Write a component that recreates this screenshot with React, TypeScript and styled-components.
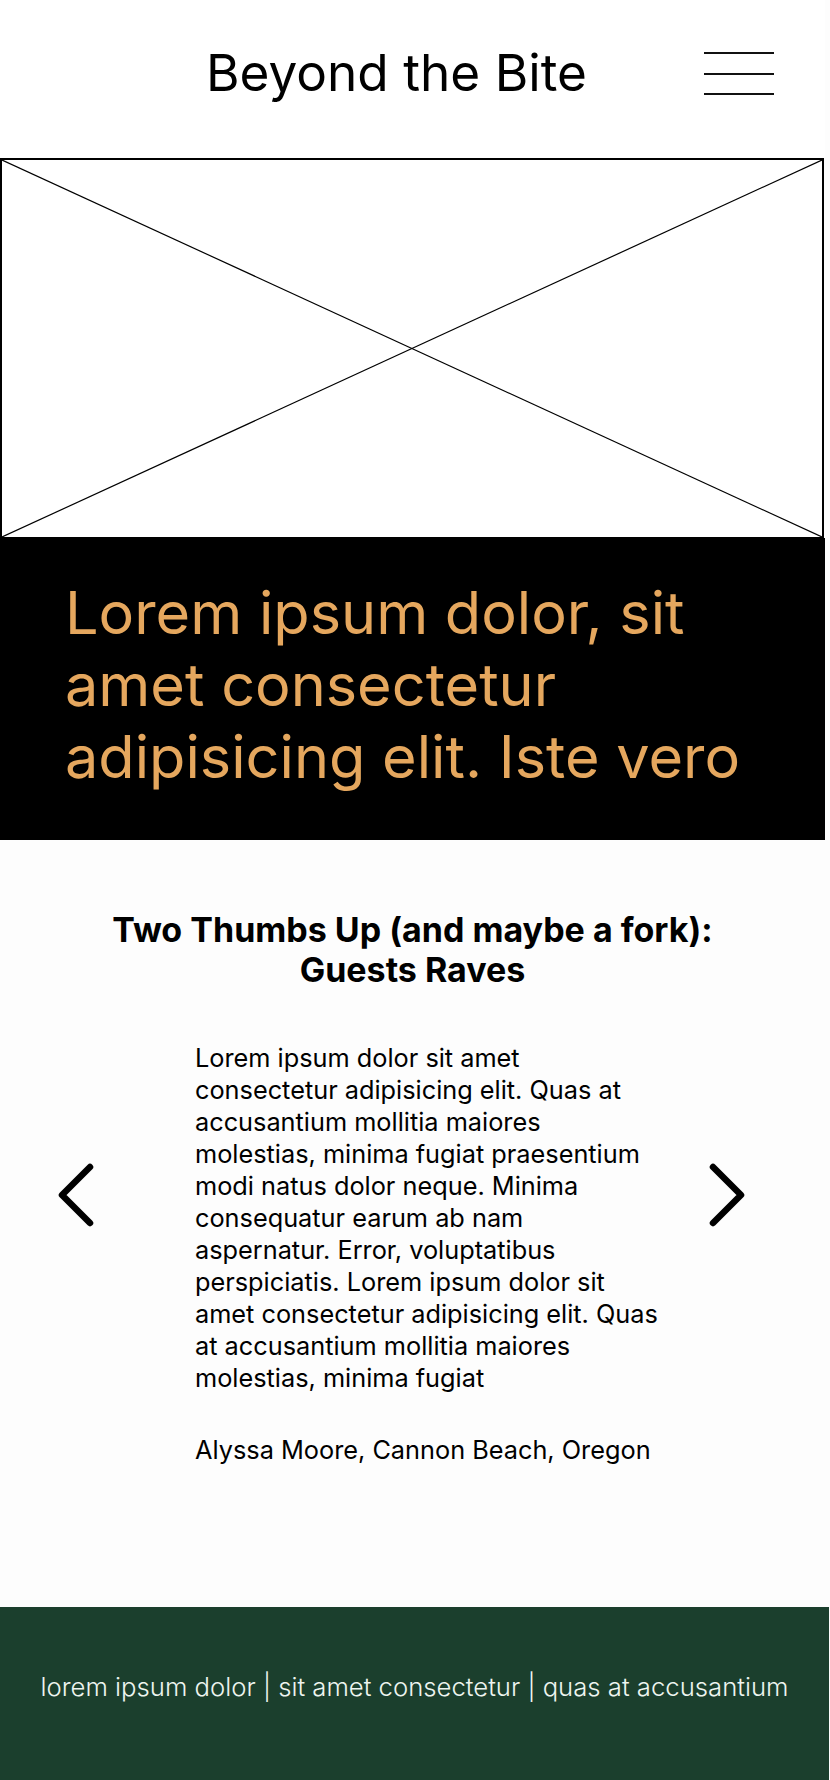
import React from "react";
import styled, { createGlobalStyle } from "styled-components";

const GlobalStyle = createGlobalStyle`
  html, body {
    margin: 0;
    padding: 0;
    background: #fdfdfd;
  }
  body {
    font-family: Inter, "Noto Sans", sans-serif;
    color: #000;
  }
  * { box-sizing: border-box; }
`;

const Page = styled.div`
  width: 825px;
  display: flex;
  flex-direction: column;
`;

const Header = styled.header`
  height: 158px;
  display: flex;
  align-items: flex-start;
  justify-content: space-between;
  padding: 41px 51px 0 206px;
  background: #fff;
`;

const SiteTitle = styled.h1`
  margin: 0;
  font-family: Inter, sans-serif;
  font-weight: 400;
  font-size: 51.3px;
  line-height: 1.21;
  letter-spacing: 0;
`;

const Burger = styled.button`
  margin-top: 11px;
  width: 70px;
  height: 43px;
  padding: 0;
  border: none;
  background: transparent;
  display: flex;
  flex-direction: column;
  justify-content: space-between;
`;

const BurgerLine = styled.span`
  display: block;
  width: 100%;
  height: 2px;
  background: #111;
`;

const HeroImage = styled.div`
  position: relative;
  height: 380px;
  width: 824px;
  border: 2px solid #000;
  border-bottom-width: 1px;
  background: #fff;
`;

const Cross = styled.svg`
  position: absolute;
  inset: 0;
  width: 100%;
  height: 100%;
  display: block;
`;

const Banner = styled.section`
  background: #000;
  padding: 38px 30px 48px 65px;
`;

const BannerText = styled.h2`
  margin: 0;
  color: #e5a75e;
  font-weight: 400;
  font-size: 59.4px;
  line-height: 72px;
`;

const Reviews = styled.section`
  background: #fdfdfd;
  padding: 70px 0 141px;
  display: flex;
  flex-direction: column;
`;

const ReviewsTitle = styled.h3`
  margin: 0;
  text-align: center;
  font-weight: 700;
  font-size: 34px;
  line-height: 40px;
`;

const Carousel = styled.div`
  margin-top: 52px;
  display: flex;
  align-items: flex-start;
  padding: 0 80px 0 58px;
`;

const ArrowButton = styled.button`
  margin-top: 121px;
  padding: 0;
  border: none;
  background: transparent;
  width: 36px;
  height: 64px;
  flex: none;
  display: block;
`;

const Quote = styled.blockquote`
  margin: 0 44px 0 101px;
  width: 470px;
  flex: none;
  font-size: 25.3px;
  line-height: 32px;
  font-weight: 400;
`;

const QuoteText = styled.p`
  margin: 0;
`;

const Author = styled.p`
  margin: 40px 0 0;
`;

const Footer = styled.footer`
  width: 829px;
  min-height: 174px;
  background: #1b3f2d;
  color: #eef5f0;
  padding-top: 64px;
  text-align: center;
  font-weight: 300;
  font-size: 25.7px;
  line-height: 31px;
`;

const Chevron: React.FC<{ dir: "left" | "right" }> = ({ dir }) => (
  <ArrowButton aria-label={dir === "left" ? "Previous" : "Next"}>
    <svg width="36" height="64" viewBox="0 0 36 64" fill="none">
      <polyline
        points={dir === "left" ? "32,4 4,32 32,60" : "4,4 32,32 4,60"}
        stroke="#000"
        strokeWidth="6.5"
        strokeLinecap="round"
        strokeLinejoin="round"
      />
    </svg>
  </ArrowButton>
);

export default function App() {
  return (
    <>
      <GlobalStyle />
      <Page>
        <Header>
          <SiteTitle>Beyond the Bite</SiteTitle>
          <Burger aria-label="Menu">
            <BurgerLine />
            <BurgerLine />
            <BurgerLine />
          </Burger>
        </Header>
        <HeroImage>
          <Cross viewBox="0 0 100 100" preserveAspectRatio="none">
            <line x1="0" y1="0" x2="100" y2="100" stroke="#000" strokeWidth="1.2" vectorEffect="non-scaling-stroke" />
            <line x1="100" y1="0" x2="0" y2="100" stroke="#000" strokeWidth="1.2" vectorEffect="non-scaling-stroke" />
          </Cross>
        </HeroImage>
        <Banner>
          <BannerText>
            Lorem ipsum dolor, sit amet consectetur adipisicing elit. Iste vero
          </BannerText>
        </Banner>
        <Reviews>
          <ReviewsTitle>
            Two Thumbs Up (and maybe a fork):
            <br />
            Guests Raves
          </ReviewsTitle>
          <Carousel>
            <Chevron dir="left" />
            <Quote>
              <QuoteText>
                Lorem ipsum dolor sit amet consectetur adipisicing elit. Quas at
                accusantium mollitia maiores molestias, minima fugiat praesentium
                modi natus dolor neque. Minima consequatur earum ab nam
                aspernatur. Error, voluptatibus perspiciatis. Lorem ipsum dolor
                sit amet consectetur adipisicing elit. Quas at accusantium
                mollitia maiores molestias, minima fugiat
              </QuoteText>
              <Author>Alyssa Moore, Cannon Beach, Oregon</Author>
            </Quote>
            <Chevron dir="right" />
          </Carousel>
        </Reviews>
        <Footer>
          lorem ipsum dolor | sit amet consectetur | quas at accusantium
        </Footer>
      </Page>
    </>
  );
}
